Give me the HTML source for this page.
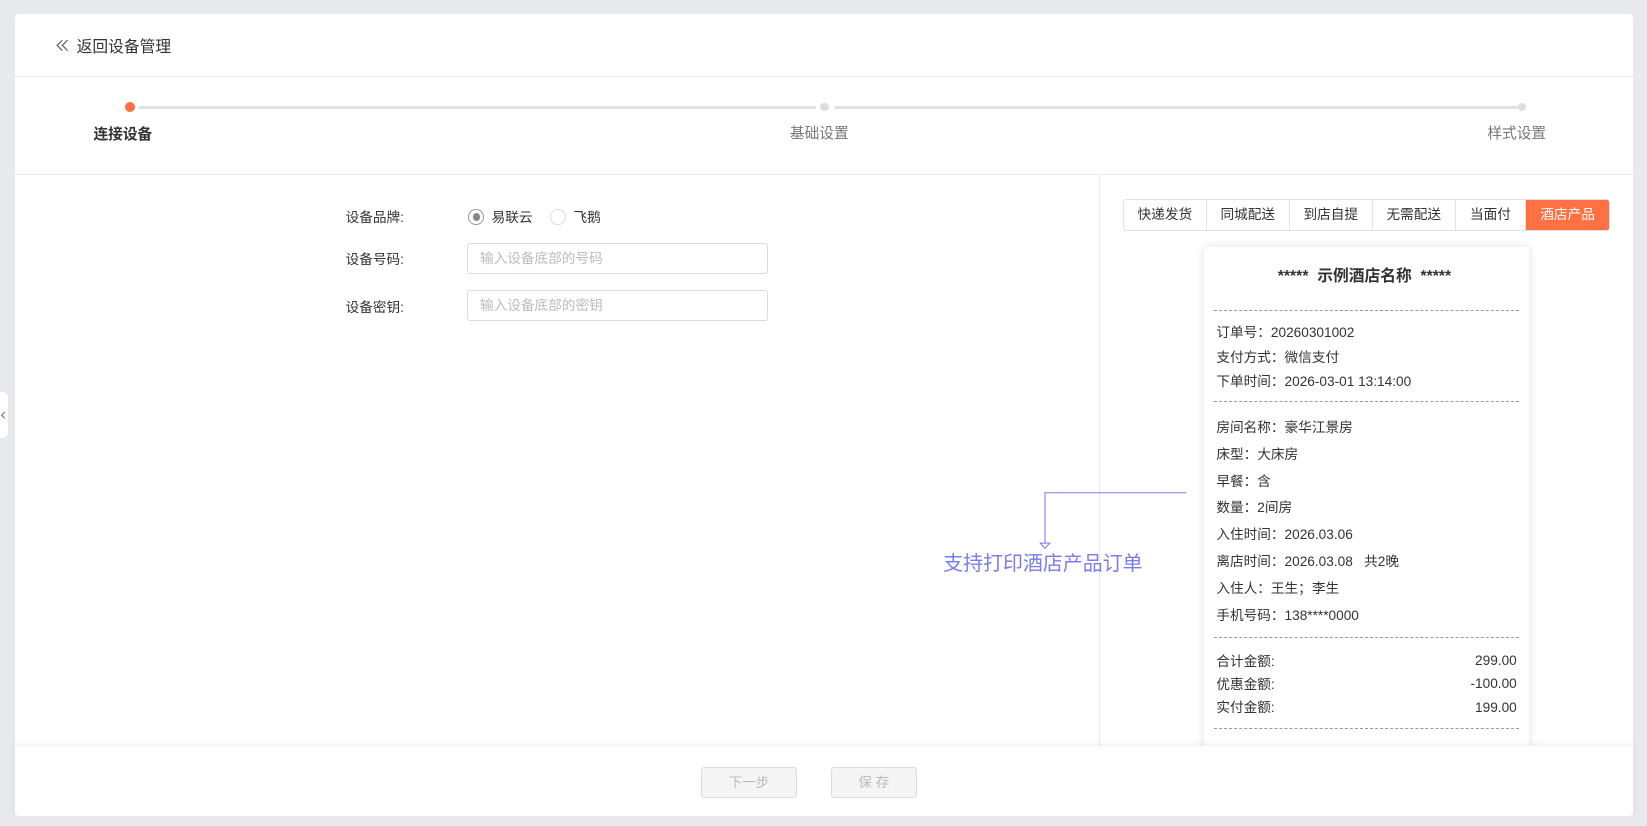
<!DOCTYPE html>
<html><head><meta charset="utf-8"><style>
*{margin:0;padding:0;box-sizing:border-box}
html,body{width:1647px;height:826px;overflow:hidden;background:#e8e9ec}
body{font-family:"Liberation Sans","Noto Sans CJK SC",sans-serif;color:#333}
#w{position:relative;width:1568px;height:786px;zoom:1.05038}
.a{position:absolute}
.card{left:14px;top:13px;width:1541px;height:764px;background:#fff;border-radius:4px}
.t{position:absolute;white-space:nowrap}
.lbl{font-size:13px;color:#333}
.inp{position:absolute;left:445px;width:286px;height:30px;border:1px solid #dcdcdc;border-radius:3px;font-size:13px;color:#bbb;padding-left:11px;line-height:28px}
.tabs{left:1069px;top:189px;height:31px;display:flex;border:1px solid #e2e2e2;border-radius:3px;overflow:hidden}
.tabs div{height:29px;line-height:29px;text-align:center;font-size:13px;border-right:1px solid #e2e2e2;color:#333}
.rc{left:1146px;top:235px;width:310px;height:480px;background:#fff;box-shadow:0 0 8px rgba(0,0,0,.12)}
.dash{position:absolute;left:10px;width:290px;border-top:1px dashed #999}
.r{position:absolute;left:12px;font-size:13px;color:#333;white-space:nowrap}
.rr{position:absolute;right:12px;font-size:13px;color:#333}
.btn{position:absolute;top:730px;height:30px;border:1px solid #dcdcdc;border-radius:3px;background:#f5f5f5;color:#bbb;font-size:13px;text-align:center;line-height:28px}
</style></head><body><div id="w">
<div class="a card"></div>
<svg class="a" style="left:52px;top:36px" width="14" height="14" viewBox="0 0 14 14"><path d="M7 2L2 7l5 5M12 2L7 7l5 5" fill="none" stroke="#555" stroke-width="1.1"/></svg>
<div class="t" style="left:73px;top:32px;font-size:15px;color:#333">返回设备管理</div>
<div class="a" style="left:14px;top:72px;width:1541px;height:1px;background:#eaeaea"></div>
<div class="a" style="left:132px;top:101px;width:645px;height:3px;background:#e1e1e1"></div>
<div class="a" style="left:795px;top:101px;width:650px;height:3px;background:#e1e1e1"></div>
<div class="a" style="left:119px;top:97px;width:10px;height:10px;border-radius:50%;background:#ff6e44"></div>
<div class="a" style="left:781px;top:98px;width:8px;height:8px;border-radius:50%;background:#ddd"></div>
<div class="a" style="left:1445px;top:98px;width:8px;height:8px;border-radius:50%;background:#ddd"></div>
<div class="t" style="left:89px;top:117px;font-size:14px;font-weight:bold;color:#333">连接设备</div>
<div class="t" style="left:752px;top:116px;font-size:14px;color:#777">基础设置</div>
<div class="t" style="left:1416px;top:116px;font-size:14px;color:#777">样式设置</div>
<div class="a" style="left:14px;top:166px;width:1541px;height:1px;background:#eaeaea"></div>
<div class="a" style="left:1046px;top:166px;width:1px;height:544px;background:#eaeaea"></div>
<div class="t lbl" style="left:329px;top:196px">设备品牌:</div>
<div class="t lbl" style="left:329px;top:236px">设备号码:</div>
<div class="t lbl" style="left:329px;top:282px">设备密钥:</div>
<div class="a" style="left:446px;top:199px;width:15px;height:15px;border-radius:50%;border:1px solid #999"></div>
<div class="a" style="left:450px;top:203px;width:7px;height:7px;border-radius:50%;background:#888"></div>
<div class="t lbl" style="left:468px;top:196px">易联云</div>
<div class="a" style="left:524px;top:199px;width:15px;height:15px;border-radius:50%;border:1px solid #ddd"></div>
<div class="t lbl" style="left:546px;top:196px">飞鹅</div>
<div class="inp" style="top:231px">输入设备底部的号码</div>
<div class="inp" style="top:276px">输入设备底部的密钥</div>
<div class="a tabs"><div style="width:79px">快递发货</div><div style="width:79px">同城配送</div><div style="width:79px">到店自提</div><div style="width:79px">无需配送</div><div style="width:67px">当面付</div><div style="width:79px;background:#ff7043;color:#fff;border:none">酒店产品</div></div>
<div class="a rc">
<div class="t" style="left:-2px;width:310px;text-align:center;top:15px;font-size:15px;font-weight:bold;color:#333">*****&nbsp; 示例酒店名称 &nbsp;*****</div>
<div class="dash" style="top:60px"></div>
<div class="r" style="top:71px">订单号：20260301002</div>
<div class="r" style="top:94px">支付方式：微信支付</div>
<div class="r" style="top:117px">下单时间：2026-03-01 13:14:00</div>
<div class="dash" style="top:147px"></div>
<div class="r" style="top:161px">房间名称：豪华江景房</div>
<div class="r" style="top:187px">床型：大床房</div>
<div class="r" style="top:212px">早餐：含</div>
<div class="r" style="top:237px">数量：2间房</div>
<div class="r" style="top:263px">入住时间：2026.03.06</div>
<div class="r" style="top:289px">离店时间：2026.03.08 &nbsp; 共2晚</div>
<div class="r" style="top:314px">入住人：王生；李生</div>
<div class="r" style="top:340px">手机号码：138****0000</div>
<div class="dash" style="top:371px"></div>
<div class="r" style="top:384px">合计金额:</div><div class="rr" style="top:387px">299.00</div>
<div class="r" style="top:406px">优惠金额:</div><div class="rr" style="top:409px">-100.00</div>
<div class="r" style="top:428px">实付金额:</div><div class="rr" style="top:431px">199.00</div>
<div class="dash" style="top:458px"></div>
</div>
<svg class="a" style="left:985px;top:465px" width="150" height="62"><path d="M144 4.5H9.5V55" fill="none" stroke="#7b7bf0" stroke-width="1"/><path d="M5 52.5h9l-4.5 5z" fill="#fff" stroke="#7b7bf0"/></svg>
<div class="t" style="left:898px;top:521px;font-size:19px;color:#7b7bf0">支持打印酒店产品订单</div>
<div class="a" style="left:14px;top:710px;width:1541px;height:67px;background:#fff;box-shadow:0 -2px 6px rgba(0,0,0,.06);border-radius:0 0 4px 4px"></div>
<div class="btn" style="left:667px;width:92px">下一步</div>
<div class="btn" style="left:791px;width:82px">保 存</div>
<div class="a" style="left:0;top:373px;width:8px;height:44px;background:#fff;border-radius:0 5px 5px 0"></div>
<svg class="a" style="left:0;top:391px" width="6" height="8"><path d="M4.5 1L1.5 4l3 3" fill="none" stroke="#666"/></svg>
</div></body></html>
